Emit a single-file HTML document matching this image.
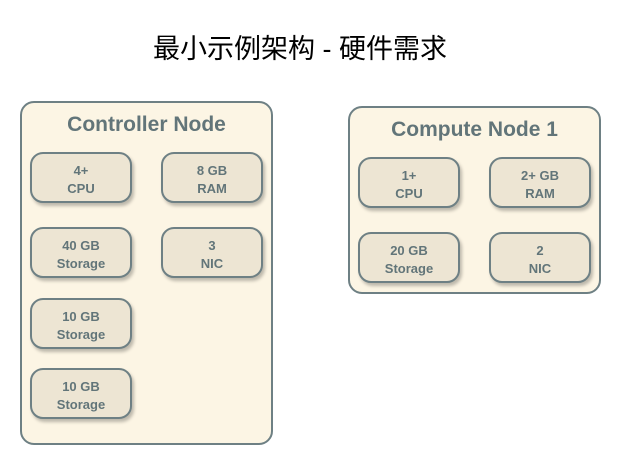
<!DOCTYPE html>
<html><head><meta charset="utf-8"><style>
body{margin:0;width:620px;height:465px;background:#fff;position:relative;font-family:"Liberation Sans","Noto Sans CJK SC",sans-serif;overflow:hidden}
.t{position:absolute;left:0;width:600px;top:27px;text-align:center;font-size:27px;color:#000;font-family:"Liberation Sans","Noto Sans CJK SC",sans-serif}
.n{position:absolute;background:#fcf5e4;border:2px solid #6e8084;border-radius:14px;box-sizing:border-box}
.h{position:absolute;left:0;right:0;text-align:center;font-weight:bold;color:#627579;font-size:21px}
.b{position:absolute;width:102px;height:51px;box-sizing:border-box;background:#ede5d3;border:2px solid #6e8084;border-radius:13px;box-shadow:2px 3px 3px rgba(0,0,0,.25);color:#627579;font-weight:bold;font-size:13px;text-align:center;line-height:18px;padding-top:8px}
</style></head><body>
<div class="t">最小示例架构 - 硬件需求</div>
<div class="n" style="left:20px;top:101px;width:253px;height:344px"><div class="h" style="top:10px">Controller Node</div></div>
<div class="n" style="left:348px;top:106px;width:253px;height:188px"><div class="h" style="top:10px">Compute Node 1</div></div>
<div class="b" style="left:30px;top:152px">4+<br>CPU</div>
<div class="b" style="left:161px;top:152px">8 GB<br>RAM</div>
<div class="b" style="left:30px;top:227px">40 GB<br>Storage</div>
<div class="b" style="left:161px;top:227px">3<br>NIC</div>
<div class="b" style="left:30px;top:298px">10 GB<br>Storage</div>
<div class="b" style="left:30px;top:368px">10 GB<br>Storage</div>
<div class="b" style="left:358px;top:157px">1+<br>CPU</div>
<div class="b" style="left:489px;top:157px">2+ GB<br>RAM</div>
<div class="b" style="left:358px;top:232px">20 GB<br>Storage</div>
<div class="b" style="left:489px;top:232px">2<br>NIC</div>
</body></html>
